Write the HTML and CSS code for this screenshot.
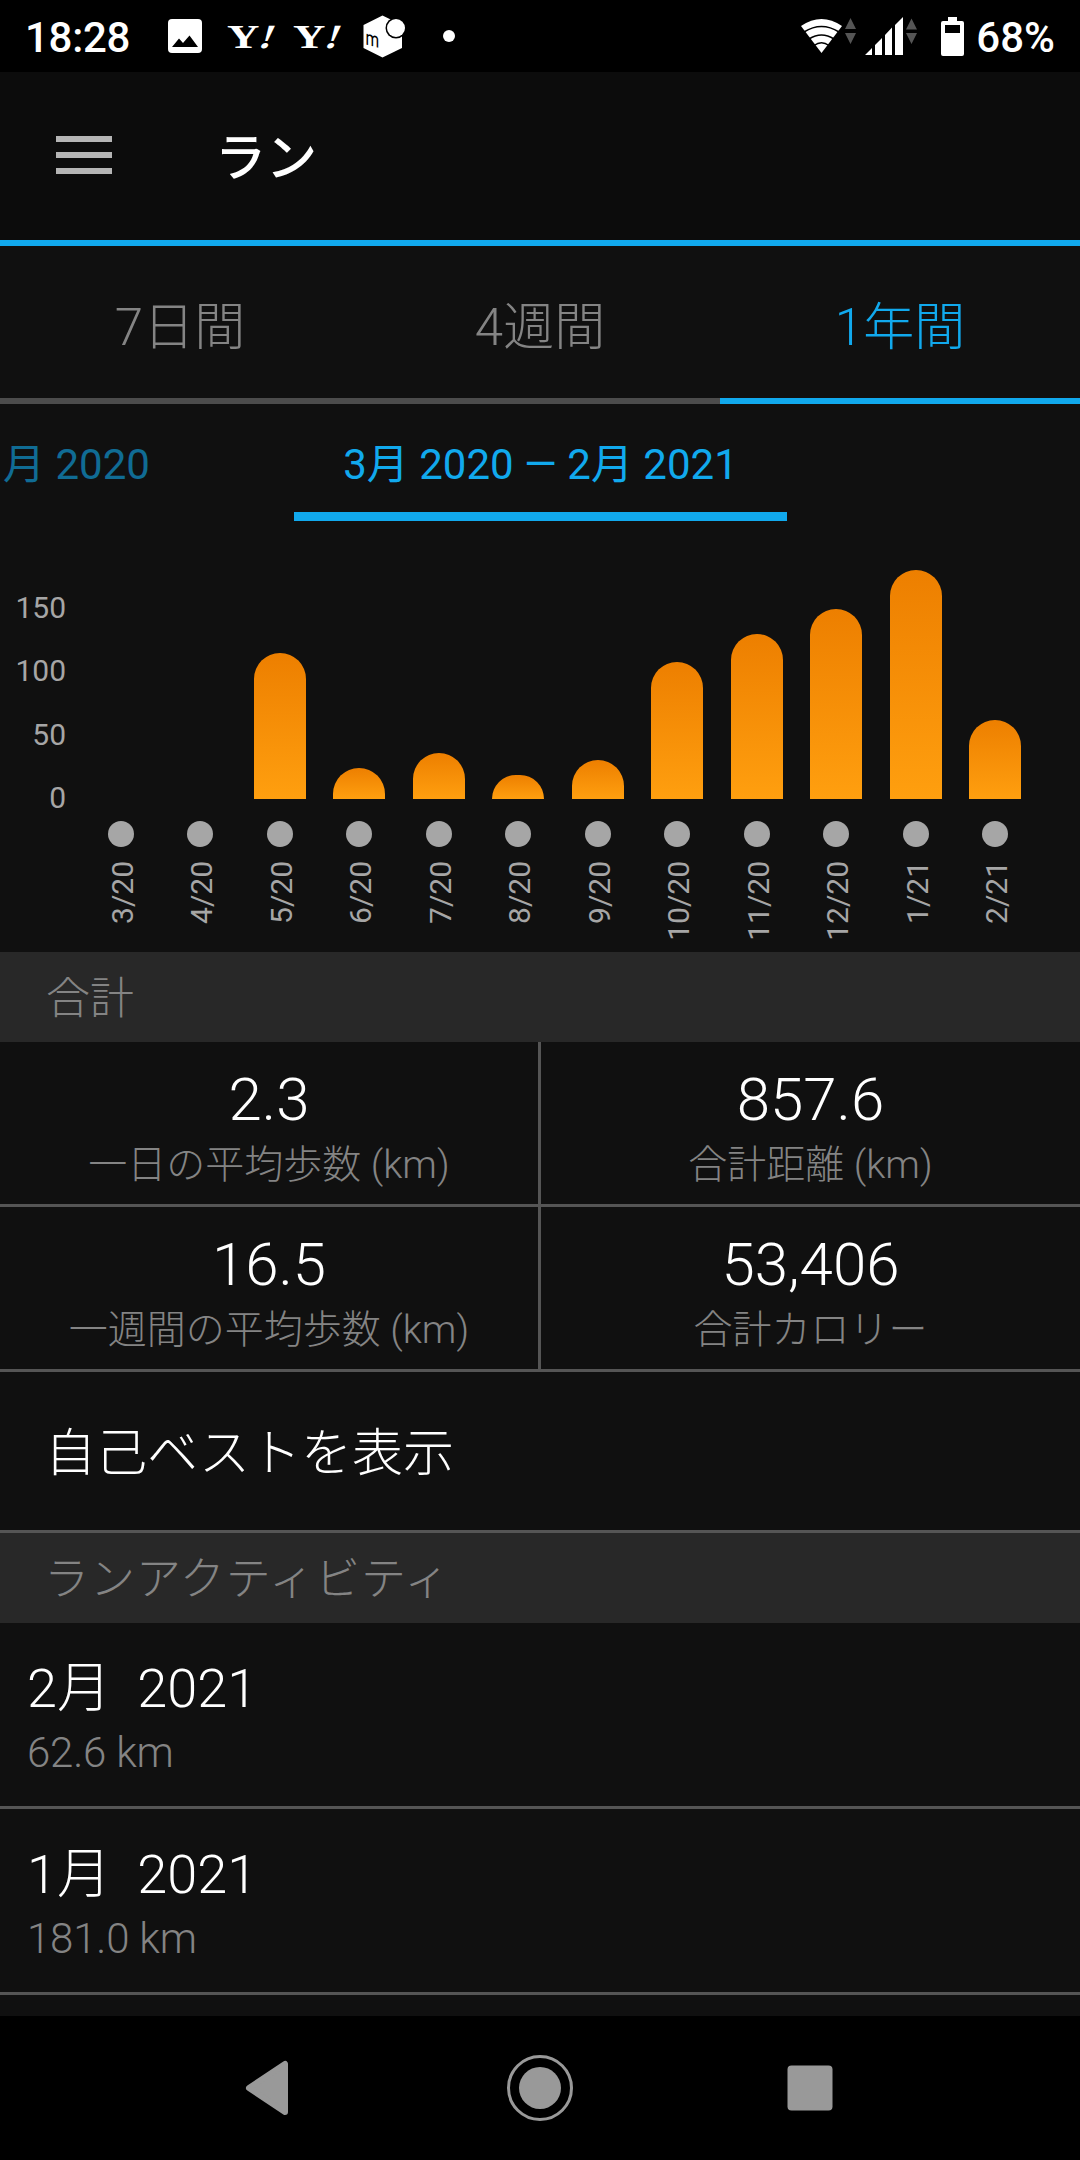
FILE: index.html
```
<!DOCTYPE html>
<html lang="ja">
<head>
    <meta charset="UTF-8" />
    <title>ラン</title>
    <meta name="viewport" content="width=device-width, initial-scale=1.0" />
    <link rel="stylesheet" href="styles.css">
</head>
<body>

    <div class="status-bar">
        <span class="clock">18:28</span>
        <div class="notifications">
            <svg class="icon-photo" width="34" height="34" viewBox="0 0 34 34">
                <rect width="34" height="34" rx="4" fill="#fff" />
                <path d="M4 28 L11 19.500 L15 24 L21.500 16.500 L30 28 Z" fill="#000" />
            </svg>
            <svg class="icon-yahoo" width="62" height="56" viewBox="0 0 62 56">
                <text class="yahoo-y" transform="translate(0 40) scale(1.32 1)">Y</text>
                <text class="yahoo-mark" transform="translate(30 40) skewX(-20) scale(1.2 1)">!</text>
            </svg>
            <svg class="icon-yahoo" width="62" height="56" viewBox="0 0 62 56">
                <text class="yahoo-y" transform="translate(0 40) scale(1.32 1)">Y</text>
                <text class="yahoo-mark" transform="translate(30 40) skewX(-20) scale(1.2 1)">!</text>
            </svg>
            <svg class="icon-box" width="43" height="43" viewBox="0 0 43 43">
                <path d="M19.500 0.500 L39 10 V33 L19.500 42.500 L0.500 33 V10 Z" fill="#fff" />
                <circle cx="33" cy="13" r="10.500" fill="#000" />
                <circle cx="33" cy="13" r="9" fill="#fff" />
                <text class="box-letter" transform="translate(2.500 29.500) skewY(14) scale(0.82 1.1)">m</text>
            </svg>
            <span class="more-dot"></span>
        </div>
        <div class="system-icons">
            <svg width="56" height="36" viewBox="0 0 56 36">
                <path d="M20.500 35 L0 8 Q20.500 -6 41 8 Z" fill="#fff" />
                <g fill="none" stroke="#000" stroke-width="1.500">
                    <path d="M3 14 Q20.500 3 38 14" />
                    <path d="M8 21 Q20.500 13 33 21" />
                    <path d="M13 27.500 Q20.500 22 28 27.500" />
                </g>
                <path d="M49.500 0 L55 11 H44 Z M49.500 26 L55 15 H44 Z" fill="#555" />
            </svg>
            <svg class="icon-signal" width="53" height="38" viewBox="0 0 53 38">
                <path d="M0 38 L7 31 V38 Z M10 28 L17 21 V38 H10 Z M20 18 L27 10.500 V38 H20 Z M30 8 L38 0 V38 H30 Z" fill="#fff" />
                <path d="M46.500 1.500 L52 12.500 H41 Z M46.500 27 L52 16 H41 Z" fill="#555" />
            </svg>
            <svg class="icon-battery" width="23" height="39" viewBox="0 0 23 39">
                <path d="M7 0 H16 V4 H21 Q23 4 23 6 V37 Q23 39 21 39 H2 Q0 39 0 37 V6 Q0 4 2 4 H7 Z" fill="#fff" />
                <rect x="4" y="8" width="15" height="8" fill="#000" />
            </svg>
            <span class="battery-text">68%</span>
        </div>
    </div>

    <header class="app-bar">
        <div class="menu"><span></span><span></span><span></span></div>
        <h1>ラン</h1>
    </header>

    <nav class="tabs">
        <a>7日間</a>
        <a>4週間</a>
        <a class="active">1年間</a>
    </nav>

    <div class="periods">
        <span class="period previous">月 2020</span>
        <span class="period current">3月 2020 — 2月 2021</span>
    </div>

    <section class="chart">
        <div class="y-axis">
            <span>150</span>
            <span>100</span>
            <span>50</span>
            <span>0</span>
        </div>
        <div class="months">
            <div class="month"><div class="plot"></div><i></i><label>3/20</label></div>
            <div class="month"><div class="plot"></div><i></i><label>4/20</label></div>
            <div class="month"><div class="plot"><b style="height: 146px"></b></div><i></i><label>5/20</label></div>
            <div class="month"><div class="plot"><b style="height: 31px"></b></div><i></i><label>6/20</label></div>
            <div class="month"><div class="plot"><b style="height: 46px"></b></div><i></i><label>7/20</label></div>
            <div class="month"><div class="plot"><b style="height: 24px"></b></div><i></i><label>8/20</label></div>
            <div class="month"><div class="plot"><b style="height: 39px"></b></div><i></i><label>9/20</label></div>
            <div class="month"><div class="plot"><b style="height: 137px"></b></div><i></i><label>10/20</label></div>
            <div class="month"><div class="plot"><b style="height: 165px"></b></div><i></i><label>11/20</label></div>
            <div class="month"><div class="plot"><b style="height: 190px"></b></div><i></i><label>12/20</label></div>
            <div class="month"><div class="plot"><b style="height: 229px"></b></div><i></i><label>1/21</label></div>
            <div class="month"><div class="plot"><b style="height: 79px"></b></div><i></i><label>2/21</label></div>
        </div>
    </section>

    <h2>合計</h2>
    <section class="totals">
        <div class="total">
            <strong>2.3</strong>
            <span>一日の平均歩数 (km)</span>
        </div>
        <div class="total">
            <strong>857.6</strong>
            <span>合計距離 (km)</span>
        </div>
        <div class="total">
            <strong>16.5</strong>
            <span>一週間の平均歩数 (km)</span>
        </div>
        <div class="total">
            <strong>53,406</strong>
            <span>合計カロリー</span>
        </div>
    </section>

    <a class="best-link">自己ベストを表示</a>

    <h2 class="activities-title">ランアクティビティ</h2>
    <ul class="activities">
        <li>
            <strong>2月  2021</strong>
            <span>62.6 km</span>
        </li>
        <li>
            <strong>1月  2021</strong>
            <span>181.0 km</span>
        </li>
    </ul>

    <div class="system-nav">
        <svg width="270" height="144" viewBox="0 0 270 144">
            <path d="M114 72 L150 48 V96 Z" fill="#999" stroke="#999" stroke-width="6" stroke-linejoin="round" />
        </svg>
        <svg width="270" height="144" viewBox="0 0 270 144">
            <circle cx="135" cy="72" r="31.500" fill="none" stroke="#999" stroke-width="3" />
            <circle cx="135" cy="72" r="21" fill="#999" />
        </svg>
        <svg width="270" height="144" viewBox="0 0 270 144">
            <rect x="112.500" y="49.500" width="45" height="45" rx="4" fill="#999" />
        </svg>
    </div>

</body>
</html>
```
FILE: styles.css
```
:root {
    --blue: #11a9ed; /* Accent for lines and selected text */
    --bg: #101010; /* Page background */
    --bar: #282828; /* Section headings */
    --line: #555555; /* Dividers */
    --muted: #848484; /* Secondary text */
    --axis: #a6a6a6; /* Chart labels */
}

* {
    margin: 0;
    padding: 0;
    box-sizing: border-box;
}

body {
    width: 1080px;
    height: 2160px;
    display: flex;
    flex-direction: column;
    overflow: hidden;
    background: var(--bg);
    color: #fff;
    font-family: Roboto, "Noto Sans CJK JP", sans-serif;
    font-weight: 300;
}

svg {
    display: block;
    flex: none;
}

/* Status bar */
.status-bar {
    height: 72px;
    flex: none;
    display: flex;
    align-items: center;
    padding: 0 25px;
    background: #000;
    font-size: 42px;
    font-weight: 500;
}

.clock {
    width: 143px;
    padding-top: 2px;
    letter-spacing: -0.3px;
}

.notifications {
    display: flex;
    align-items: center;
}

.icon-yahoo {
    margin-left: 25px;
}

.icon-yahoo + .icon-yahoo {
    margin-left: 4px;
}

.icon-box {
    margin-left: 8px;
}

.yahoo-y,
.yahoo-mark {
    font: bold 34px "Liberation Serif", serif;
    fill: #fff;
}

.box-letter {
    font: 400 19px Roboto, sans-serif;
    fill: #000;
}

.more-dot {
    width: 12px;
    height: 12px;
    margin-left: 37px;
    border-radius: 50%;
    background: #fff;
}

.system-icons {
    display: flex;
    align-items: center;
    margin-left: auto;
}

.icon-signal {
    margin-left: 8px;
}

.icon-battery {
    margin-left: 23px;
}

.battery-text {
    margin-left: 12px;
    padding-top: 2px;
}

/* App bar */
.app-bar {
    height: 174px;
    flex: none;
    display: flex;
    align-items: center;
    padding: 0 56px 2px;
    background: #0c0c0c;
    border-bottom: 6px solid var(--blue);
}

.menu {
    width: 56px;
    display: flex;
    flex-direction: column;
    gap: 10px;
}

.menu span {
    height: 6px;
    background: #b5b5b5;
}

h1 {
    margin-left: 103px;
    padding-bottom: 2px;
    font-size: 51px;
    font-weight: 500;
}

/* Range tabs */
.tabs {
    height: 158px;
    flex: none;
    display: grid;
    grid-template-columns: repeat(3, 1fr);
}

.tabs a {
    display: flex;
    align-items: center;
    justify-content: center;
    padding-top: 2px;
    border-bottom: 6px solid #4c4c4c;
    color: var(--muted);
    font-size: 51px;
}

.tabs .active {
    border-color: var(--blue);
    color: var(--blue);
}

/* Period selector */
.periods {
    height: 117px;
    flex: none;
    display: flex;
    color: var(--blue);
    font-size: 42px;
    font-weight: 400;
}

.period {
    display: flex;
    align-items: center;
    justify-content: center;
    padding-top: 5px;
    white-space: nowrap;
}

.previous {
    width: 294px;
    justify-content: flex-start;
    padding: 5px 0 9px 3px;
    opacity: 0.6;
}

.current {
    width: 493px;
    border-bottom: 9px solid var(--blue);
}

/* Bar chart */
.chart {
    height: 431px;
    flex: none;
    display: flex;
    color: var(--axis);
    font-size: 30px;
    font-weight: 400;
}

.y-axis {
    width: 81px;
    padding: 55px 15px 0 0;
    text-align: right;
}

.y-axis span {
    display: block;
    height: 63.400px;
    line-height: 64px;
}

.months {
    width: 954px;
    display: grid;
    grid-template-columns: repeat(12, 1fr);
}

.month {
    display: flex;
    flex-direction: column;
    align-items: center;
}

.plot {
    height: 278px;
    display: flex;
    align-items: flex-end;
}

.plot b {
    width: 52px;
    border-radius: 26px 26px 0 0;
    background: linear-gradient(#ed7f00, #ff9f0f);
}

.month i {
    width: 26px;
    height: 26px;
    margin: 22px 0 14px;
    border-radius: 50%;
    background: var(--axis);
}

.month label {
    margin-left: 3px;
    writing-mode: vertical-rl;
    transform: rotate(180deg);
}

/* Section headings */
h2 {
    height: 90px;
    flex: none;
    padding: 2px 0 0 46px;
    background: var(--bar);
    color: var(--muted);
    font-size: 44px;
    font-weight: 300;
    line-height: 90px;
}

.activities-title {
    padding-left: 44px;
    font-size: 45px;
    letter-spacing: 1px;
}

/* Totals */
.totals {
    flex: none;
    display: grid;
    grid-template-columns: 541px 539px;
}

.total {
    height: 165px;
    display: flex;
    flex-direction: column;
    align-items: center;
    padding-top: 22px;
    border-bottom: 3px solid var(--line);
}

.total:nth-child(odd) {
    border-right: 3px solid var(--line);
}

.total strong {
    font-size: 60px;
    font-weight: 300;
    line-height: 72px;
}

.total span {
    color: var(--muted);
    font-size: 39px;
    line-height: 58px;
}

.best-link {
    height: 161px;
    flex: none;
    padding-left: 45px;
    border-bottom: 3px solid var(--line);
    font-size: 51px;
    line-height: 164px;
}

/* Monthly activities */
.activities {
    height: 393px;
    flex: none;
    list-style: none;
}

.activities li {
    height: 186px;
    display: flex;
    flex-direction: column;
    padding: 32px 27px 0;
    border-bottom: 3px solid var(--line);
}

.activities strong {
    font-size: 54px;
    font-weight: 300;
    line-height: 68px;
    white-space: pre;
}

.activities span {
    color: var(--muted);
    font-size: 42px;
    line-height: 60px;
    letter-spacing: -0.2px;
}

/* System navigation */
.system-nav {
    height: 144px;
    flex: none;
    display: flex;
    justify-content: center;
    background: #000;
}
```
